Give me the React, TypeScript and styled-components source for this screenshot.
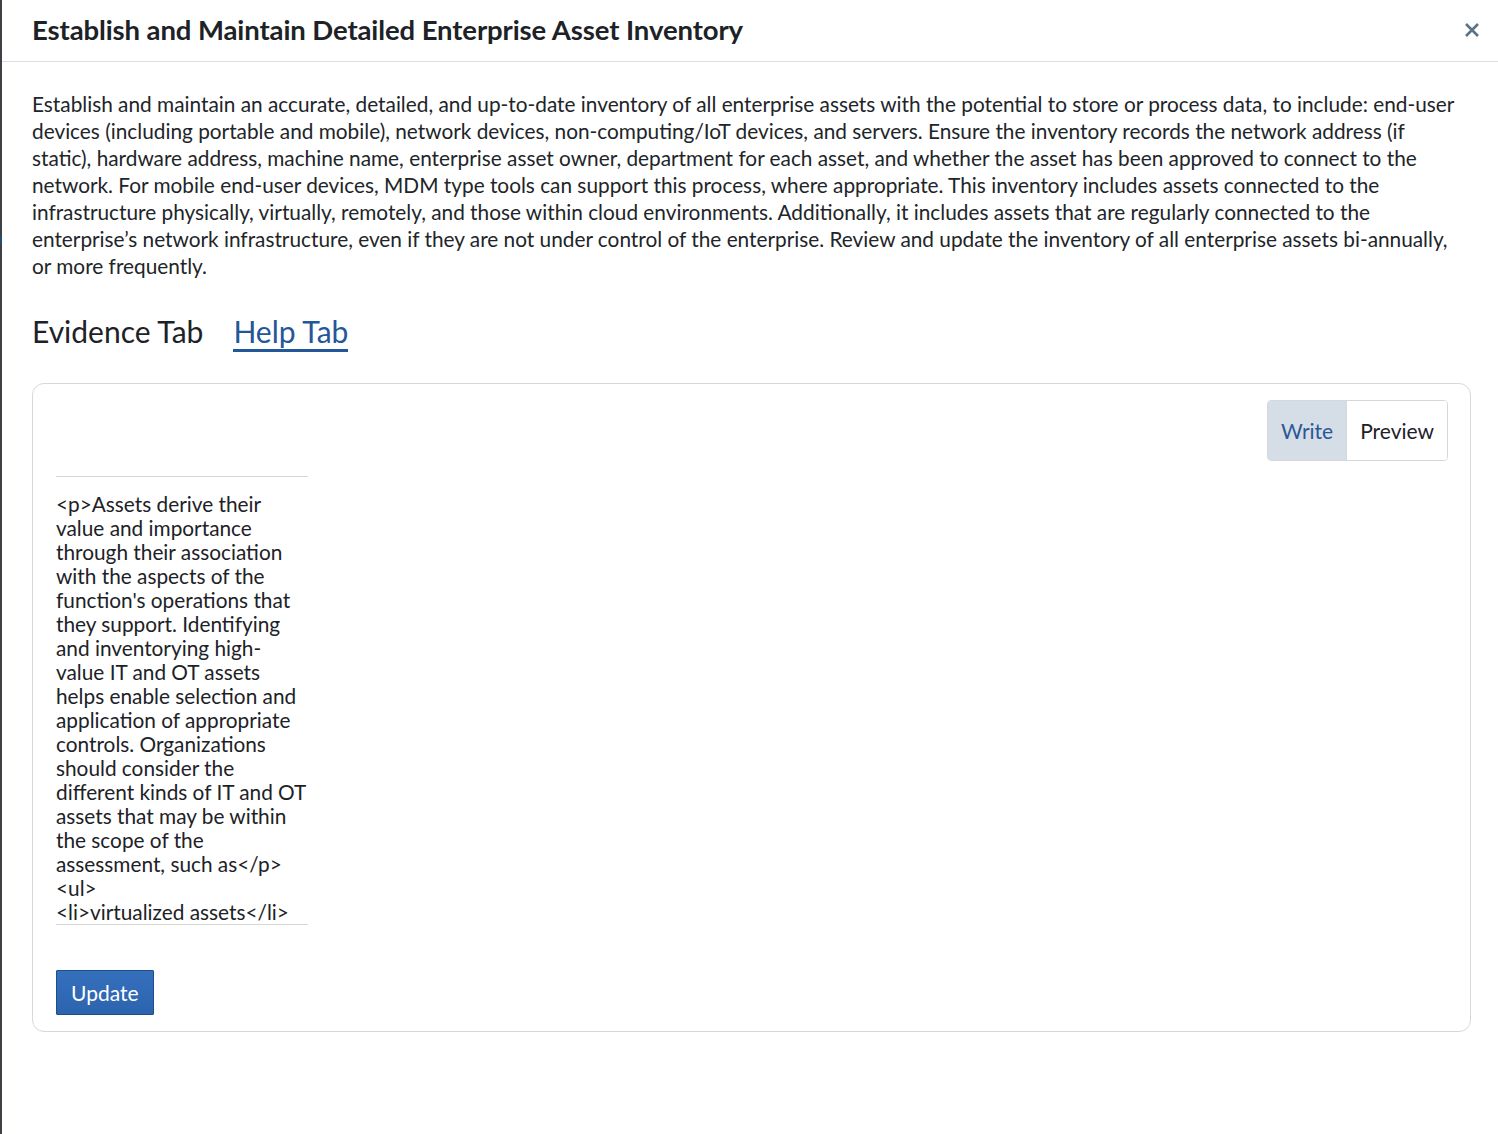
import React from "react";
import styled, { createGlobalStyle } from "styled-components";

const GlobalStyle = createGlobalStyle`
  html, body {
    margin: 0;
    padding: 0;
    background: #ffffff;
  }
  body {
    font-family: Lato, "Open Sans", "Liberation Sans", sans-serif;
    color: #212529;
  }
`;

const Page = styled.div`
  display: flex;
  min-height: 1134px;
`;

const Rail = styled.div`
  width: 2px;
  flex-shrink: 0;
  background: #3d4145;
  display: flex;
  flex-direction: column;
`;

const RailMark = styled.div`
  margin-top: 236px;
  height: 7px;
  background: #1f4e7a;
`;

const Modal = styled.div`
  flex: 1;
  display: flex;
  flex-direction: column;
`;

const Header = styled.div`
  height: 61px;
  display: flex;
  align-items: center;
  justify-content: space-between;
  padding: 0 15px 0 30px;
  border-bottom: 1px solid #dcdfe2;
`;

const Title = styled.h1`
  margin: 0 0 2px;
  font-size: 27.5px;
  font-weight: 700;
  color: #1d2227;
  letter-spacing: -0.1px;
`;

const Close = styled.button`
  width: 22px;
  height: 22px;
  padding: 0;
  margin-bottom: 2px;
  border: none;
  background: none;
  display: flex;
  align-items: center;
  justify-content: center;
  color: #5c7386;
  cursor: pointer;
`;

const Body = styled.div`
  padding: 28px 27px 0 30px;
`;

const Description = styled.p`
  margin: 0 5px 0 0;
  font-size: 20.8px;
  line-height: 27px;
  color: #212529;
`;

const Tabs = styled.div`
  display: flex;
  gap: 30px;
  margin-top: 34px;
  height: 39px;
  align-items: flex-start;
`;

const Tab = styled.span<{ $active?: boolean }>`
  font-size: 30px;
  line-height: 36px;
  color: ${(p) => (p.$active ? "#24569a" : "#1d2227")};
  border-bottom: 3px solid ${(p) => (p.$active ? "#24569a" : "transparent")};
  cursor: pointer;
`;

const Card = styled.div`
  margin-top: 31px;
  border: 1px solid #d8d8d8;
  border-radius: 12px;
  padding: 16px 22px 16px 23px;
  display: flex;
  flex-direction: column;
`;

const ModeRow = styled.div`
  display: flex;
  justify-content: flex-end;
`;

const ModeGroup = styled.div`
  display: flex;
  border: 1px solid #d6d9dc;
  border-radius: 4px;
  overflow: hidden;
`;

const ModeButton = styled.button<{ $on?: boolean }>`
  height: 59px;
  padding: 0 13px;
  border: none;
  background: ${(p) => (p.$on ? "#d5dde6" : "#ffffff")};
  color: ${(p) => (p.$on ? "#2a5796" : "#1d2227")};
  font-family: inherit;
  font-size: 21px;
  & + & {
    border-left: 1px solid #d6d9dc;
  }
`;

const Editor = styled.textarea`
  margin-top: 15px;
  width: 252px;
  height: 449px;
  box-sizing: border-box;
  padding: 15px 0 0;
  border: none;
  border-top: 1px solid #d6d6d6;
  border-bottom: 1px solid #d6d6d6;
  font-family: inherit;
  font-size: 20.8px;
  line-height: 24px;
  color: #1d2227;
  resize: none;
  overflow: hidden;
  outline: none;
`;

const Submit = styled.button`
  margin-top: 45px;
  align-self: flex-start;
  height: 45px;
  padding: 0 14px;
  border: 1px solid #1f4d8c;
  border-radius: 1px;
  background: linear-gradient(#3570bd, #2c63ae);
  color: #ffffff;
  font-family: inherit;
  font-size: 21px;
  cursor: pointer;
`;

const helpText = `<p>Assets derive their value and importance through their association with the aspects of the function's operations that they support. Identifying and inventorying high-value IT and OT assets helps enable selection and application of appropriate controls. Organizations should consider the different kinds of IT and OT assets that may be within the scope of the assessment, such as</p>
<ul>
<li>virtualized assets</li>
</ul>`;

export default function App() {
  return (
    <>
      <GlobalStyle />
      <Page>
        <Rail>
          <RailMark />
        </Rail>
        <Modal>
          <Header>
            <Title>Establish and Maintain Detailed Enterprise Asset Inventory</Title>
            <Close aria-label="Close">
              <svg width="16" height="16" viewBox="0 0 16 16">
                <path d="M2 2 L14 14 M14 2 L2 14" stroke="currentColor" strokeWidth="2.6" />
              </svg>
            </Close>
          </Header>
          <Body>
            <Description>
              Establish and maintain an accurate, detailed, and up-to-date inventory of all enterprise
              assets with the potential to store or process data, to include: end-user devices
              (including portable and mobile), network devices, non-computing/IoT devices, and servers.
              Ensure the inventory records the network address (if static), hardware address, machine
              name, enterprise asset owner, department for each asset, and whether the asset has been
              approved to connect to the network. For mobile end-user devices, MDM type tools can
              support this process, where appropriate. This inventory includes assets connected to the
              infrastructure physically, virtually, remotely, and those within cloud environments.
              Additionally, it includes assets that are regularly connected to the enterprise’s network
              infrastructure, even if they are not under control of the enterprise. Review and update
              the inventory of all enterprise assets bi-annually, or more frequently.
            </Description>
            <Tabs>
              <Tab>Evidence Tab</Tab>
              <Tab $active>Help Tab</Tab>
            </Tabs>
            <Card>
              <ModeRow>
                <ModeGroup>
                  <ModeButton $on>Write</ModeButton>
                  <ModeButton>Preview</ModeButton>
                </ModeGroup>
              </ModeRow>
              <Editor defaultValue={helpText} spellCheck={false} />
              <Submit>Update</Submit>
            </Card>
          </Body>
        </Modal>
      </Page>
    </>
  );
}
